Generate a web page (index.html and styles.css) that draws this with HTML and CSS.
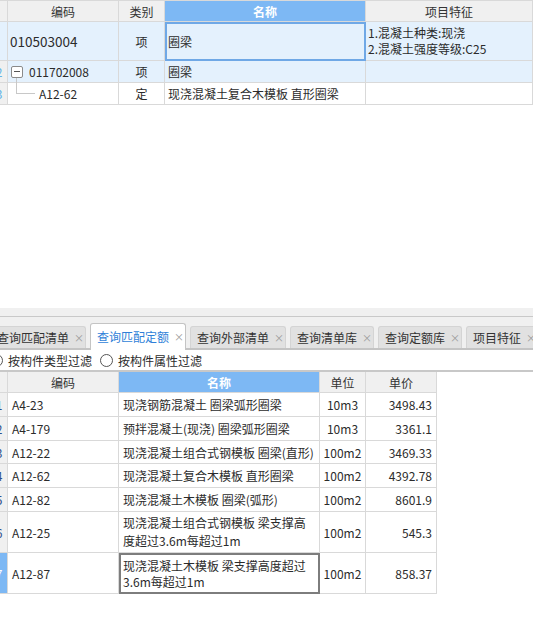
FILE: index.html
```html
<!DOCTYPE html>
<html lang="zh-CN">
<head>
<meta charset="utf-8">
<title>查询匹配定额</title>
<link rel="stylesheet" href="styles.css">
</head>
<body>
<div class="top-pane">
  <div class="grid top-grid">
    <div class="cell hd stub"></div>
    <div class="cell hd">编码</div>
    <div class="cell hd">类别</div>
    <div class="cell hd hd-active">名称</div>
    <div class="cell hd">项目特征</div>

    <div class="cell stub stub-sel sel"></div>
    <div class="cell sel code-big">010503004</div>
    <div class="cell sel center">项</div>
    <div class="cell sel focus-blue">圈梁</div>
    <div class="cell sel feature"><div>1.混凝土种类:现浇</div><div>2.混凝土强度等级:C25</div></div>

    <div class="cell stub sel-light"><span class="rn rn-light">2</span></div>
    <div class="cell sel tree"><span class="minus"></span><span>011702008</span></div>
    <div class="cell sel center">项</div>
    <div class="cell sel">圈梁</div>
    <div class="cell sel"></div>

    <div class="cell stub"><span class="rn rn-light">3</span></div>
    <div class="cell tree-child"><span class="connector"></span><span>A12-62</span></div>
    <div class="cell center">定</div>
    <div class="cell">现浇混凝土复合木模板 直形圈梁</div>
    <div class="cell"></div>
  </div>
</div>

<div class="strip-top"></div>
<div class="tabbar">
  <div class="tabs">
    <div class="tab"><span>查询匹配清单</span><span class="x">×</span></div>
    <div class="tab active"><span>查询匹配定额</span><span class="x">×</span></div>
    <div class="tab"><span>查询外部清单</span><span class="x">×</span></div>
    <div class="tab"><span>查询清单库</span><span class="x">×</span></div>
    <div class="tab"><span>查询定额库</span><span class="x">×</span></div>
    <div class="tab"><span>项目特征</span><span class="x">×</span></div>
  </div>
</div>

<div class="filters">
  <label class="radio"><span class="circle"></span><span>按构件类型过滤</span></label>
  <label class="radio"><span class="circle"></span><span>按构件属性过滤</span></label>
</div>

<div class="bottom-pane">
  <div class="grid bottom-grid">
    <div class="cell hd stub"></div>
    <div class="cell hd">编码</div>
    <div class="cell hd hd-active">名称</div>
    <div class="cell hd">单位</div>
    <div class="cell hd">单价</div>

    <div class="cell stub"><span class="rn">1</span></div>
    <div class="cell pad">A4-23</div>
    <div class="cell pad">现浇钢筋混凝土 圈梁弧形圈梁</div>
    <div class="cell center">10m3</div>
    <div class="cell num">3498.43</div>

    <div class="cell stub"><span class="rn">2</span></div>
    <div class="cell pad">A4-179</div>
    <div class="cell pad">预拌混凝土(现浇) 圈梁弧形圈梁</div>
    <div class="cell center">10m3</div>
    <div class="cell num">3361.1</div>

    <div class="cell stub"><span class="rn">3</span></div>
    <div class="cell pad">A12-22</div>
    <div class="cell pad">现浇混凝土组合式钢模板 圈梁(直形)</div>
    <div class="cell center">100m2</div>
    <div class="cell num">3469.33</div>

    <div class="cell stub"><span class="rn">4</span></div>
    <div class="cell pad">A12-62</div>
    <div class="cell pad">现浇混凝土复合木模板 直形圈梁</div>
    <div class="cell center">100m2</div>
    <div class="cell num">4392.78</div>

    <div class="cell stub"><span class="rn">5</span></div>
    <div class="cell pad">A12-82</div>
    <div class="cell pad">现浇混凝土木模板 圈梁(弧形)</div>
    <div class="cell center">100m2</div>
    <div class="cell num">8601.9</div>

    <div class="cell stub"><span class="rn">6</span></div>
    <div class="cell pad">A12-25</div>
    <div class="cell pad wrap">现浇混凝土组合式钢模板 梁支撑高度超过3.6m每超过1m</div>
    <div class="cell center">100m2</div>
    <div class="cell num">545.3</div>

    <div class="cell stub stub-sel"><span class="rn rn-white">7</span></div>
    <div class="cell pad">A12-87</div>
    <div class="cell pad wrap focus-gray">现浇混凝土木模板 梁支撑高度超过3.6m每超过1m</div>
    <div class="cell center">100m2</div>
    <div class="cell num">858.37</div>
  </div>
</div>
</body>
</html>
```

FILE: styles.css
```css
* { box-sizing: border-box; }

html, body {
  margin: 0;
  padding: 0;
  background: #ffffff;
}

body {
  width: 533px;
  height: 641px;
  overflow: hidden;
  font-family: "Noto Sans CJK SC", "Noto Sans", sans-serif;
  font-size: 12px;
  line-height: 17px;
  color: #2b2b2b;
}

.grid {
  display: grid;
}

.cell {
  border-right: 1px solid #d9d9d9;
  border-bottom: 1px solid #d9d9d9;
  display: flex;
  align-items: center;
  padding: 0 3px;
  white-space: nowrap;
  overflow: hidden;
  background: #ffffff;
}

.hd {
  background: #f0f0f0;
  justify-content: center;
  color: #333333;
}

.hd-active {
  background: #7db8f4;
  color: #ffffff;
  font-weight: bold;
}

.stub {
  padding: 0;
  background: #f0f0f0;
  overflow: hidden;
}

.stub-sel {
  background: #7db8f4;
}

.rn {
  display: block;
  width: 20px;
  margin-left: -11px;
  text-align: center;
  color: #2c4f8c;
  flex: none;
}

.rn-light { color: #62b3e8; }
.rn-white { color: #ffffff; }

.center { justify-content: center; }

.num {
  justify-content: flex-end;
  padding-right: 4px;
}

.pad { padding-left: 4px; }

/* top pane */
.top-pane {
  height: 308px;
  background: #ffffff;
}

.top-grid {
  grid-template-columns: 8px 111px 46px 201px 167px;
  grid-template-rows: 21px 39px 22px 22px;
  border-top: 1px solid #d9d9d9;
}

.sel { background: #e4f1fd; }
.sel-light { background: #f0f0f0; }

.code-big {
  font-size: 13.5px;
  padding-left: 2px;
}

.focus-blue {
  border: 2px solid #6fa8e6;
  padding-left: 1px;
}

.feature {
  flex-direction: column;
  align-items: flex-start;
  justify-content: center;
  line-height: 16px;
  padding-left: 2px;
}

.tree { padding-left: 3px; gap: 6px; }

.minus {
  width: 12px;
  height: 12px;
  border: 1px solid #8a8a8a;
  border-radius: 2px;
  background: #ffffff;
  display: flex;
  align-items: center;
  justify-content: center;
  flex: none;
}

.minus::before {
  content: "";
  width: 6px;
  height: 1px;
  background: #555555;
}

.tree-child {
  padding-left: 8px;
  overflow: visible;
  gap: 4px;
}

.connector {
  width: 19px;
  height: 16px;
  margin-top: -15px;
  border-left: 1px solid #c8c8c8;
  border-bottom: 1px solid #c8c8c8;
  flex: none;
}

/* tab strip */
.strip-top {
  height: 9px;
  background: #f0f0f0;
  border-bottom: 1px solid #c9c9c9;
}

.tabbar {
  height: 33px;
  background: #f0f0f0;
  border-bottom: 2px solid #c4c4c4;
  overflow: visible;
}

.tabs {
  display: flex;
  align-items: flex-end;
  gap: 4px;
  height: 31px;
  margin-left: -10px;
}

.tab {
  display: flex;
  align-items: center;
  height: 22px;
  padding: 0 5px 0 6px;
  background: #e1e1e1;
  border: 1px solid #d4d4d4;
  border-bottom: none;
  border-radius: 3px 3px 0 0;
  color: #333333;
  white-space: nowrap;
  flex: none;
}

.tab.active {
  height: 27px;
  margin-bottom: -2px;
  background: #ffffff;
  border-color: #c4c4c4;
  color: #2f7fd8;
  padding-bottom: 2px;
}

.x {
  margin-left: 5px;
  width: 6px;
  font-size: 10px;
  color: #9a9a9a;
}

/* filters */
.filters {
  height: 20px;
  display: flex;
  align-items: center;
  gap: 8px;
  margin-left: -10px;
}

.radio {
  display: flex;
  align-items: center;
  gap: 5px;
}

.circle {
  width: 13px;
  height: 13px;
  border: 1px solid #555555;
  border-radius: 50%;
  background: #ffffff;
  flex: none;
}

/* bottom pane */
.bottom-pane {
  border-top: 2px solid #c8c8c8;
}

.bottom-grid {
  grid-template-columns: 8px 111px 201px 46px 71px;
  grid-template-rows: 21px 24px 24px 23px 24px 24px 41px 41px;
  width: 437px;
}

.wrap {
  white-space: normal;
  line-height: 18px;
  align-items: center;
}

.focus-gray {
  border: 2px solid #7d7d7d;
  line-height: 16px;
  padding-left: 2px;
}
```
